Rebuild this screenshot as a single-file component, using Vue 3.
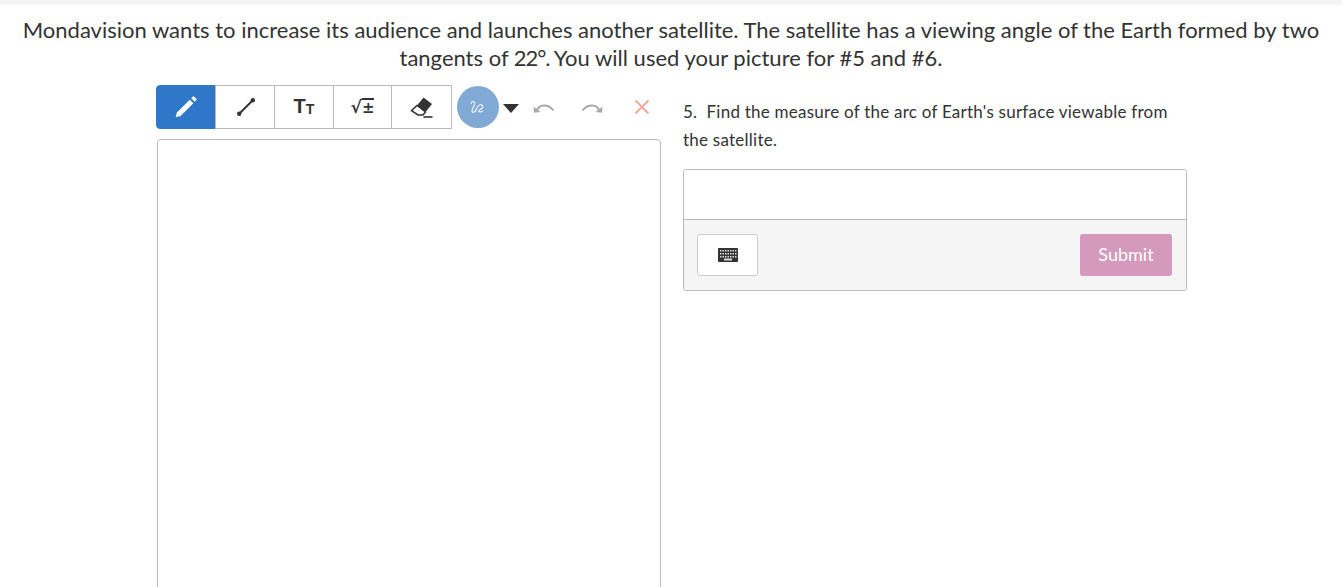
<script setup>
const keyRows = [2, 5, 8]
const keyCols = [2, 4.5, 7, 9.5, 12, 14.5, 17]
</script>

<template>
  <div class="page">
    <h1 class="title"><span class="line">Mondavision wants to increase its audience and launches another satellite. The satellite has a viewing angle of the Earth formed by two</span><span class="line">tangents of <span class="deg">22°. </span>You will used your picture for #5 and #6.</span></h1>
    <div class="work">
      <div class="left">
        <div class="toolbar">
          <div class="tools">
            <button class="tool active" aria-label="pen">
              <svg width="26" height="26" viewBox="0 0 24 24"><path d="M2.500 21.500 3.600 17 15.500 5.200l3.300 3.300L7 20.400z" fill="#fff"/><path d="M16.800 3.900l1.400-1.400a1 1 0 0 1 1.400 0l1.900 1.900a1 1 0 0 1 0 1.400l-1.400 1.400z" fill="#fff"/></svg>
            </button>
            <button class="tool" aria-label="line">
              <svg class="line-icon" width="20" height="20" viewBox="0 0 20 20"><path d="M3 17 17 3" stroke="#333" stroke-width="2"/><circle cx="3.200" cy="16.800" r="2.200" fill="#333"/><circle cx="16.800" cy="3.200" r="2.200" fill="#333"/></svg>
            </button>
            <button class="tool glyph" aria-label="text"><span class="tt-big">T</span><span class="tt-small">T</span></button>
            <button class="tool glyph math" aria-label="math"><span>√</span><span class="vinculum">±</span></button>
            <button class="tool" aria-label="eraser">
              <svg width="24" height="24" viewBox="0 0 24 24"><path d="M13.500 2.500 22 9l-6.500 8-8.500-6.500z" fill="#333"/><path d="M7 10.500l8.500 6.500-2.600 3H8L1.500 15.700z" fill="#fff" stroke="#333" stroke-width="1.500"/><path d="M13.500 22h9" stroke="#333" stroke-width="1.600"/></svg>
            </button>
          </div>
          <div class="swatch">
            <svg width="18" height="16" viewBox="0 0 16 14" fill="none" stroke="#fff" stroke-width="0.9"><path d="M1.500 4.500C2.500 1.500 5 1.500 5 4 5 6.500 2 9 2.700 11c.5 1.500 2.800.5 3.800-2 .8-2 2-4 4-4 1.800 0 2.300 1.500 1.300 3-1 1.300-3 1.200-3.200 2.500-.1 1.200 2 1 3.900.5"/></svg>
          </div>
          <span class="caret"></span>
          <svg class="undo" width="22" height="12" viewBox="0 0 22 12" fill="none"><path d="M3.500 10C6 3 15 2.500 20.500 9.500" stroke="#a8a8a8" stroke-width="2"/><path d="M.5 5.500l7 5.500-6.500.8z" fill="#a8a8a8"/></svg>
          <svg class="redo" width="22" height="12" viewBox="0 0 22 12" fill="none"><path d="M18.500 10C16 3 7 2.500 1.500 9.500" stroke="#a8a8a8" stroke-width="2"/><path d="M21.500 5.500l-7 5.500 6.500.8z" fill="#a8a8a8"/></svg>
          <svg class="clear" width="16" height="16" viewBox="0 0 16 16"><path d="M1.500 1.500l13 13M14.500 1.500l-13 13" stroke="#f0a898" stroke-width="1.800"/></svg>
        </div>
        <div class="canvas"></div>
      </div>
      <div class="right">
        <p class="question">5.&nbsp;&nbsp;Find the measure of the arc of Earth's surface viewable from the satellite.</p>
        <div class="answer">
          <div class="input"></div>
          <div class="actions">
            <button class="kbd" aria-label="keyboard">
              <svg width="20" height="14" viewBox="0 0 20 14"><rect width="20" height="14" rx="1" fill="#333"/><g fill="#ddd"><template v-for="y in keyRows" :key="y"><rect v-for="x in keyCols" :key="x" :x="x" :y="y" width="1.500" height="1.500"/></template><rect x="6" y="10.500" width="8" height="2"/></g></svg>
            </button>
            <button class="submit">Submit</button>
          </div>
        </div>
      </div>
    </div>
  </div>
</template>

<style>
html, body { margin: 0; height: 100%; overflow: hidden; background: #fff; }
</style>

<style scoped>
.page {
  height: 587px;
  overflow: hidden;
  box-sizing: border-box;
  border-top: 5px solid #f5f5f5;
  font-family: Lato, "Liberation Sans", sans-serif;
  color: #333;
}
.title {
  margin: 0;
  padding: 11px 15px 0;
  font-size: 22px;
  font-weight: 400;
  line-height: 28px;
  text-align: center;
}
.line { display: block; }
.deg { letter-spacing: -1.1px; }
.work {
  display: flex;
  margin-top: 13px;
  padding-left: 156px;
}
.left { width: 505px; flex: none; }
.toolbar { display: flex; align-items: center; height: 44px; }
.tools { display: flex; height: 44px; }
.tool {
  width: 60px;
  height: 44px;
  padding: 0;
  margin-left: -1px;
  display: flex;
  align-items: center;
  justify-content: center;
  background: #fff;
  border: 1px solid #bbb;
  color: #333;
  font-family: inherit;
}
.tool:first-child { margin-left: 0; }
.tool:nth-child(4) { width: 59px; }
.tool:last-child { width: 61px; }
.tool.active { background: #2f78c9; border-color: #2f78c9; border-radius: 4px 0 0 4px; }
.line-icon { margin-left: 2px; }
.tt-big { font-family: "Liberation Sans", sans-serif; font-size: 20px; font-weight: 700; line-height: 1; margin-bottom: 2px; }
.tt-small { font-family: "Liberation Sans", sans-serif; font-size: 14px; font-weight: 700; line-height: 1; margin: 3px 0 0; }
.math { font-size: 17px; font-weight: 700; font-family: "DejaVu Sans", sans-serif; }
.vinculum { border-top: 2px solid #333; line-height: 17px; font-size: 15px; }
.swatch {
  width: 42px;
  height: 42px;
  margin-left: 5px;
  border-radius: 50%;
  background: #80a9d6;
  display: flex;
  align-items: center;
  justify-content: center;
}
.caret {
  width: 0;
  height: 0;
  margin: 2px 0 0 4px;
  border-left: 8.500px solid transparent;
  border-right: 8.500px solid transparent;
  border-top: 9px solid #333;
}
.undo { margin-left: 14px; }
.redo { margin-left: 26px; }
.clear { margin-left: 31px; }
.canvas {
  margin: 10px 0 0 1px;
  height: 600px;
  box-sizing: border-box;
  border: 1px solid #bbb;
  border-radius: 4px;
  background: #fff;
}
.right { width: 504px; margin-left: 22px; flex: none; }
.question {
  margin: 0;
  padding-top: 13px;
  font-size: 17px;
  letter-spacing: 0.24px;
  line-height: 28px;
  color: #333;
}
.answer {
  margin-top: 15px;
  border: 1px solid #bbb;
  border-radius: 3px;
  overflow: hidden;
}
.input { height: 49px; background: #fff; border-bottom: 1px solid #bbb; }
.actions {
  display: flex;
  justify-content: space-between;
  align-items: center;
  height: 70px;
  padding: 0 14px 0 13px;
  background: #f5f5f5;
}
.kbd {
  width: 61px;
  height: 42px;
  padding: 0;
  display: flex;
  align-items: center;
  justify-content: center;
  background: #fff;
  border: 1px solid #ccc;
  border-radius: 3px;
}
.submit {
  width: 92px;
  height: 42px;
  padding: 0 0 3px;
  border: none;
  border-radius: 3px;
  background: #d59abb;
  color: #fff;
  font-family: inherit;
  font-size: 18px;
}
</style>
